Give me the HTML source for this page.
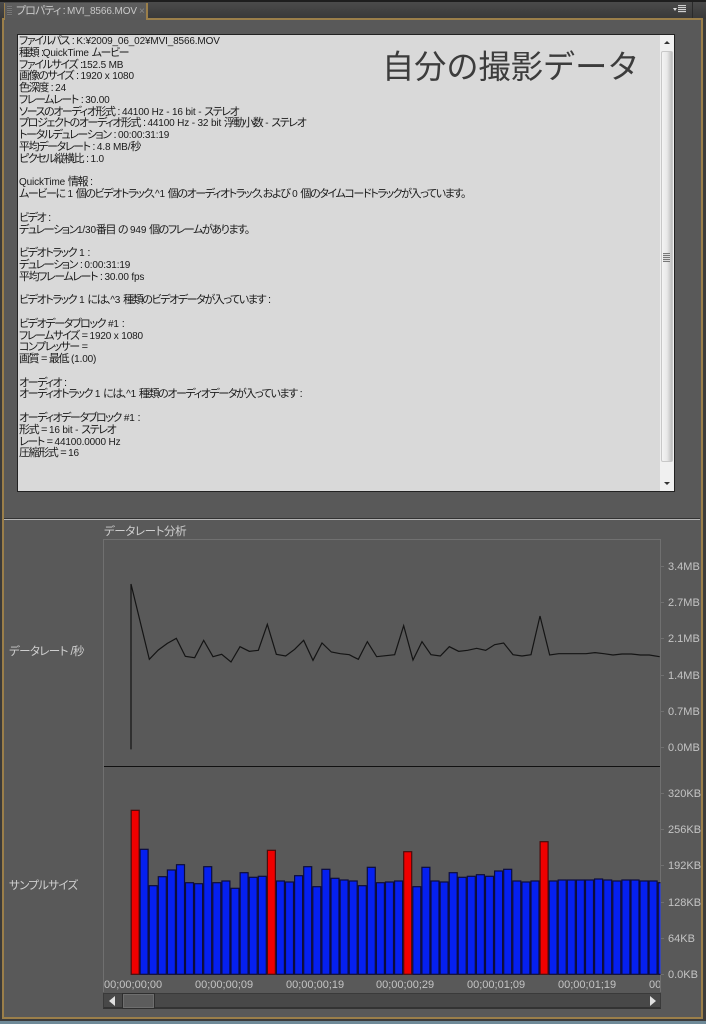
<!DOCTYPE html>
<html><head><meta charset="utf-8">
<style>
html,body{margin:0;padding:0;background:#3a3a3a}
#r{position:relative;width:706px;height:1024px;overflow:hidden;background:#3c3c3c;font-family:"Liberation Sans","Noto Sans CJK JP",sans-serif;font-feature-settings:"palt"}
.a{position:absolute}
#txt{position:absolute;left:19px;top:36px;margin:0;font:11px/11.78px "Liberation Sans","Noto Sans CJK JP",sans-serif;font-feature-settings:"palt";color:#1a1a1a;white-space:pre;letter-spacing:-1.4px;word-spacing:1.2px}
#txt i{font-style:normal;font-size:10px;letter-spacing:-.15px;word-spacing:0}
.l{position:absolute;font-size:11.5px;line-height:12px;color:#cfcfcf;white-space:nowrap}
.t{position:absolute;font-size:11px;line-height:12px;color:#c4c4c4;white-space:nowrap}
</style></head><body>
<div id="r">
<div class="a" style="left:0;top:0;width:706px;height:2px;background:#1e1e1e"></div>
<div class="a" style="left:0;top:2px;width:706px;height:17px;background:linear-gradient(#4b4b4b,#383838)"></div>
<div class="a" style="left:2px;top:18px;width:701px;height:1001px;box-sizing:border-box;border:2px solid #9b7f4a;background:#595959"></div>
<div class="a" style="left:0;top:19px;width:2px;height:1001px;background:#3a3a3a"></div>
<div class="a" style="left:4px;top:3px;width:144px;height:17px;box-sizing:border-box;background:linear-gradient(#5e5e5e,#585858);border-right:2px solid #9b7f4a;border-left:1px solid #9b7f4a"></div>
<div class="a" style="left:7px;top:6px;width:5px;height:10px;background:repeating-linear-gradient(#777 0 1px,#555 1px 2px)"></div>
<div class="a" style="left:16px;top:5px;font-size:11px;line-height:13px;color:#c8c8c8;white-space:nowrap;letter-spacing:-.9px">プロパティ : <span style="font-size:10px;letter-spacing:-.1px">MVI_8566.MOV</span></div>
<div class="a" style="left:139px;top:5px;font-size:10px;line-height:13px;color:#8a8a8a">×</div>
<div class="a" style="left:678px;top:5px;width:8px;height:8px;background:repeating-linear-gradient(#d0d0d0 0 1px,#555 1px 2px)"></div>
<div class="a" style="left:673px;top:8px;width:0;height:0;border:2.5px solid transparent;border-top:3px solid #ddd"></div>
<div class="a" style="left:692px;top:2px;width:1px;height:16px;background:#2a2a2a"></div>
<div class="a" style="left:0;top:1021px;width:706px;height:3px;background:#6f8a98"></div>

<div class="a" style="left:17px;top:34px;width:658px;height:458px;box-sizing:border-box;border:1px solid #222;background:#d9d9d9"></div>
<pre id="txt">ファイルパス : <i>K:¥2009_06_02¥MVI_8566.MOV</i>
種類 :<i>QuickTime</i> ムービー
ファイルサイズ :<i>152.5 MB</i>
画像のサイズ : <i>1920 x 1080</i>
色深度 : <i>24</i>
フレームレート : <i>30.00</i>
ソースのオーディオ形式 : <i>44100 Hz - 16 bit -</i> ステレオ
プロジェクトのオーディオ形式 : <i>44100 Hz - 32 bit</i> 浮動小数 <i>-</i> ステレオ
トータルデュレーション : <i>00:00:31:19</i>
平均データレート : <i>4.8 MB/</i>秒
ピクセル縦横比 : <i>1.0</i>

<i>QuickTime</i> 情報 :
ムービーに <i>1</i> 個のビデオトラック、<i>^1</i> 個のオーディオトラック、および <i>0</i> 個のタイムコードトラックが入っています。

ビデオ :
デュレーション<i>1/30</i>番目 の <i>949</i> 個のフレームがあります。

ビデオトラック <i>1</i> :
デュレーション : <i>0:00:31:19</i>
平均フレームレート : <i>30.00 fps</i>

ビデオトラック <i>1</i> には、<i>^3</i> 種類のビデオデータが入っています :

ビデオデータブロック <i>#1</i> :
フレームサイズ = <i>1920 x 1080</i>
コンプレッサー =
画質 = 最低 <i>(1.00)</i>

オーディオ :
オーディオトラック <i>1</i> には、<i>^1</i> 種類のオーディオデータが入っています :

オーディオデータブロック <i>#1</i> :
形式 = <i>16 bit -</i> ステレオ
レート = <i>44100.0000 Hz</i>
圧縮形式 = <i>16</i></pre>
<div class="a" style="left:382px;top:47px;font-size:32.2px;line-height:40px;color:#3c3c3c;white-space:nowrap;font-feature-settings:normal">自分の撮影データ</div>

<div class="a" style="left:660px;top:35px;width:14px;height:456px;background:#f0f0f0"></div>
<div class="a" style="left:661px;top:51px;width:12px;height:411px;box-sizing:border-box;background:linear-gradient(90deg,#f4f4f4,#e8e8e8 50%,#bdbdbd);border:1px solid #c8c8c8;border-radius:2px"></div>
<div class="a" style="left:663px;top:253px;width:7px;height:9px;background:repeating-linear-gradient(#777 0 1px,#ddd 1px 2px)"></div>
<div class="a" style="left:664px;top:41px;width:0;height:0;border:3px solid transparent;border-bottom:3px solid #333;border-top:0"></div>
<div class="a" style="left:664px;top:482px;width:0;height:0;border:3px solid transparent;border-top:3px solid #333;border-bottom:0"></div>

<div class="a" style="left:4px;top:518px;width:696px;height:1px;background:#333"></div>
<div class="a" style="left:4px;top:519px;width:696px;height:1px;background:#b5b5b5"></div>

<div class="l" style="left:104px;top:526px;letter-spacing:-.4px">データレート分析</div>
<div class="l" style="left:9px;top:646px;letter-spacing:-.6px">データレート /秒</div>
<div class="l" style="left:9px;top:880px;letter-spacing:-.7px">サンプルサイズ</div>

<svg class="a" style="left:0;top:0" width="706" height="1024">
<g fill="none" stroke="#707070" stroke-width="1">
<path d="M103.5 992V539.5H660.5V992"/>
<path d="M661 566.5h3M661 602.5h3M661 638.5h3M661 675.5h3M661 711.5h3M661 747.5h3M661 793.5h3M661 829.5h3M661 865.5h3M661 902.5h3M661 938.5h3M661 974.5h3"/>
</g>
<path d="M104 766.5H660" stroke="#111" stroke-width="1"/>
<g transform="translate(0,470) scale(.33333)" fill="none" stroke="#141414" stroke-width="3.6">
<polyline points="393,838 393,342 448,568 475,540 502,520 529,505 556,559 584,563 611,511 639,560 665,553 693,576 720,530 748,544 775,541 802,463 829,553 857,558 884,538 911,511 939,571 966,519 994,546 1021,551 1048,554 1059,560"/>
<g transform="translate(1059,0)"><polyline points="0,560 16,568 43,515 71,560 98,557 125,554 152,467 180,570 207,515 234,554 262,558 289,530 317,544 344,541 371,535 398,541 425,524 452,519 480,554 507,558 534,554 561,438 590,555 617,551 645,551 672,551 699,551 726,548 753,551 780,555 807,552 835,552 862,555 889,555 920,560"/></g>
</g>
<defs><clipPath id="c"><rect x="104" y="780" width="556.5" height="196"/></clipPath></defs>
<g clip-path="url(#c)" stroke="#0c0c3c" stroke-width="1.2" fill="#0520f0">
<rect x="140.1" y="849.3" width="8" height="125"/><rect x="149.2" y="885.7" width="8" height="88.6"/><rect x="158.3" y="876.7" width="8" height="97.6"/><rect x="167.4" y="870" width="8" height="104.3"/><rect x="176.5" y="864.7" width="8" height="109.6"/><rect x="185.5" y="882.7" width="8" height="91.6"/><rect x="194.6" y="883.7" width="8" height="90.6"/><rect x="203.7" y="866.7" width="8" height="107.6"/><rect x="212.8" y="882.7" width="8" height="91.6"/><rect x="221.9" y="881" width="8" height="93.3"/><rect x="231" y="888.3" width="8" height="86"/><rect x="240.1" y="872.7" width="8" height="101.6"/><rect x="249.2" y="877.3" width="8" height="97"/><rect x="258.3" y="876.3" width="8" height="98"/>
<rect x="276.4" y="881" width="8" height="93.3"/><rect x="285.5" y="882" width="8" height="92.3"/><rect x="294.6" y="875.7" width="8" height="98.6"/><rect x="303.7" y="866.7" width="8" height="107.6"/><rect x="312.8" y="886.7" width="8" height="87.6"/><rect x="321.9" y="869.3" width="8" height="105"/><rect x="331" y="878.3" width="8" height="96"/><rect x="340.1" y="880" width="8" height="94.3"/><rect x="349.2" y="881" width="8" height="93.3"/><rect x="358.3" y="885.7" width="8" height="88.6"/><rect x="367.3" y="867.3" width="8" height="107"/><rect x="376.4" y="882.7" width="8" height="91.6"/><rect x="385.5" y="882" width="8" height="92.3"/><rect x="394.6" y="881" width="8" height="93.3"/>
<rect x="412.8" y="886.7" width="8" height="87.6"/><rect x="421.9" y="867.3" width="8" height="107"/><rect x="431" y="881" width="8" height="93.3"/><rect x="440.1" y="882" width="8" height="92.3"/><rect x="449.2" y="872.7" width="8" height="101.6"/><rect x="458.2" y="877.3" width="8" height="97"/><rect x="467.3" y="876.3" width="8" height="98"/><rect x="476.4" y="874.7" width="8" height="99.6"/><rect x="485.5" y="876.3" width="8" height="98"/><rect x="494.6" y="871" width="8" height="103.3"/><rect x="503.7" y="869.3" width="8" height="105"/><rect x="512.8" y="881" width="8" height="93.3"/><rect x="521.9" y="882" width="8" height="92.3"/><rect x="531" y="881" width="8" height="93.3"/>
<rect x="549.1" y="881" width="8" height="93.3"/><rect x="558.2" y="880" width="8" height="94.3"/><rect x="567.3" y="880" width="8" height="94.3"/><rect x="576.4" y="880" width="8" height="94.3"/><rect x="585.5" y="880" width="8" height="94.3"/><rect x="594.6" y="879" width="8" height="95.3"/><rect x="603.7" y="880" width="8" height="94.3"/><rect x="612.8" y="881" width="8" height="93.3"/><rect x="621.9" y="880" width="8" height="94.3"/><rect x="631" y="880" width="8" height="94.3"/><rect x="640" y="881" width="8" height="93.3"/><rect x="649.1" y="881" width="8" height="93.3"/><rect x="658.2" y="882.7" width="8" height="91.6"/>
<g fill="#f00000" stroke="#4a0c0c"><rect x="131.2" y="810.3" width="8" height="164"/><rect x="267.4" y="850.3" width="8" height="124"/><rect x="403.7" y="851.7" width="8" height="122.6"/><rect x="540.1" y="841.7" width="8" height="132.6"/></g>
</g>
</svg>

<div class="t" style="left:668px;top:561px">3.4MB</div>
<div class="t" style="left:668px;top:597px">2.7MB</div>
<div class="t" style="left:668px;top:633px">2.1MB</div>
<div class="t" style="left:668px;top:670px">1.4MB</div>
<div class="t" style="left:668px;top:706px">0.7MB</div>
<div class="t" style="left:668px;top:742px">0.0MB</div>
<div class="t" style="left:668px;top:788px">320KB</div>
<div class="t" style="left:668px;top:824px">256KB</div>
<div class="t" style="left:668px;top:860px">192KB</div>
<div class="t" style="left:668px;top:897px">128KB</div>
<div class="t" style="left:668px;top:933px">64KB</div>
<div class="t" style="left:668px;top:969px">0.0KB</div>

<div class="t" style="left:104px;top:979px">00;00;00;00</div>
<div class="t" style="left:195px;top:979px">00;00;00;09</div>
<div class="t" style="left:286px;top:979px">00;00;00;19</div>
<div class="t" style="left:376px;top:979px">00;00;00;29</div>
<div class="t" style="left:467px;top:979px">00;00;01;09</div>
<div class="t" style="left:558px;top:979px">00;00;01;19</div>
<div class="t" style="left:649px;top:979px;width:11px;overflow:hidden">00</div>

<div class="a" style="left:103px;top:993px;width:558px;height:16px;box-sizing:border-box;background:#484848;border:1px solid #3a3a3a;border-bottom:2px solid #333"></div>
<div class="a" style="left:122px;top:993px;width:33px;height:16px;box-sizing:border-box;background:#5c5c5c;border:1px solid #2e2e2e;box-shadow:inset 0 0 0 1px #6e6e6e"></div>
<div class="a" style="left:109px;top:996px;width:0;height:0;border:5px solid transparent;border-right:6px solid #e0e0e0;border-left:0"></div>
<div class="a" style="left:650px;top:996px;width:0;height:0;border:5px solid transparent;border-left:6px solid #e0e0e0;border-right:0"></div>
</div>
</body></html>
